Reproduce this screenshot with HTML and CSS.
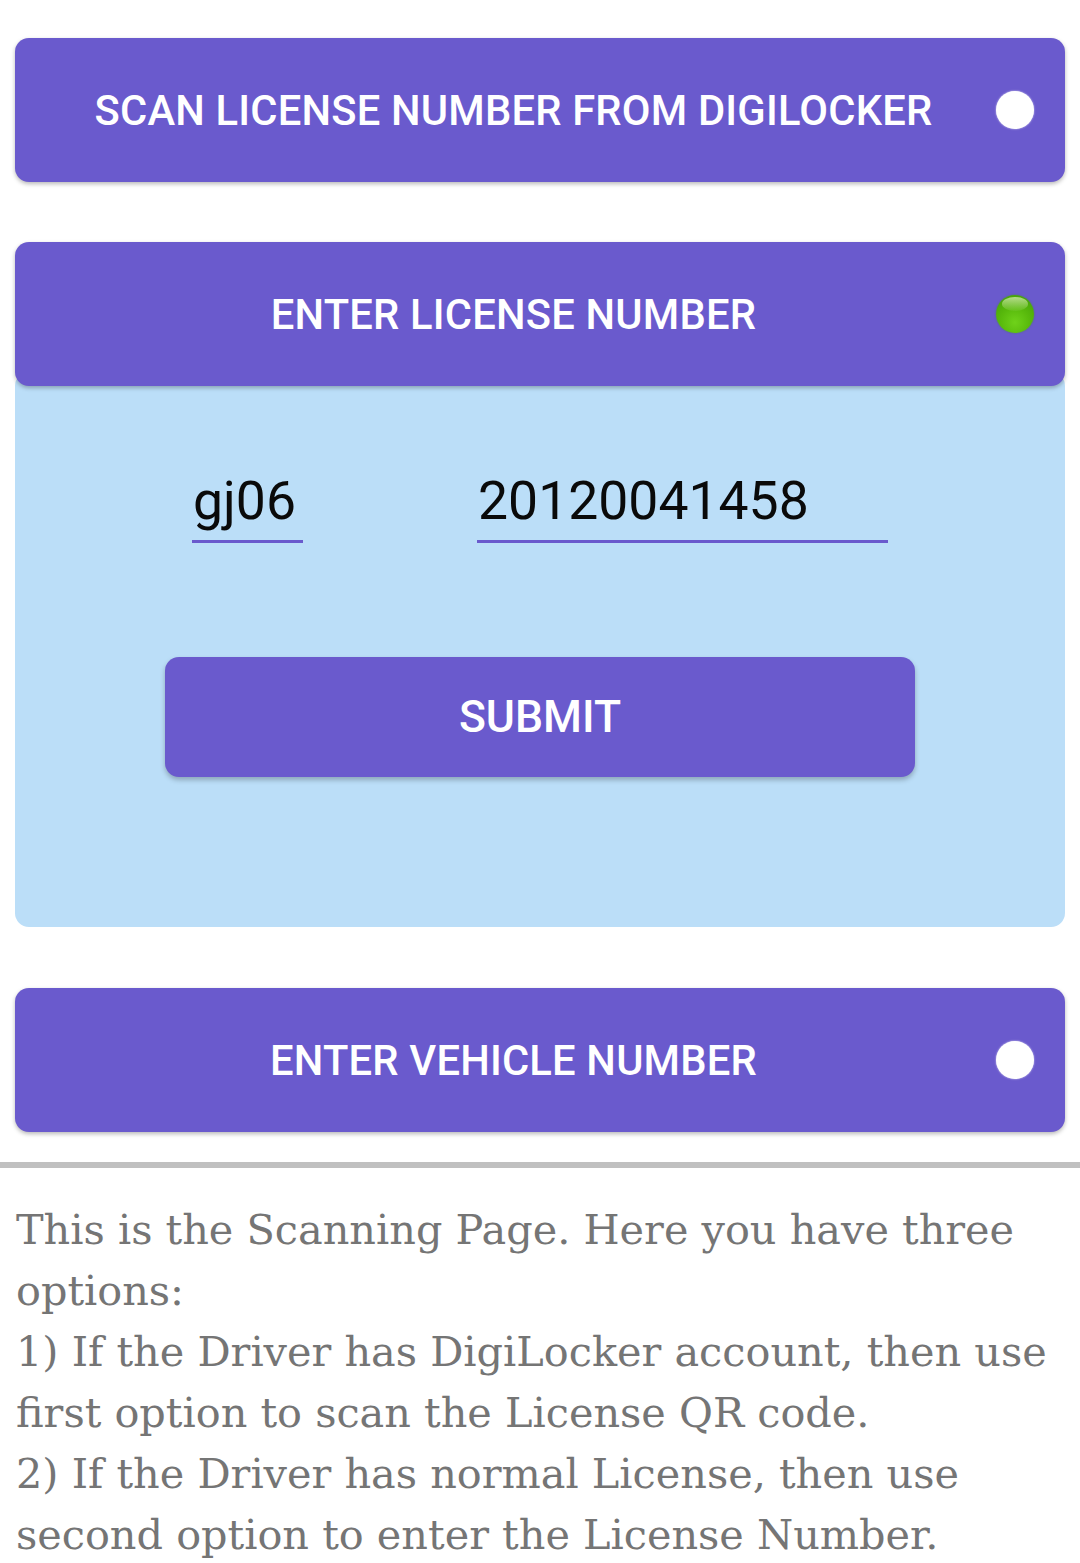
FILE: index.html
```html
<!DOCTYPE html>
<html>
<head>
<meta charset="utf-8">
<link rel="stylesheet" href="styles.css">
</head>
<body>
<div class="page">
  <div class="option">
    <span class="option-label">SCAN LICENSE NUMBER FROM DIGILOCKER</span>
    <span class="dot dot-white"></span>
  </div>

  <div class="option option-second">
    <span class="option-label">ENTER LICENSE NUMBER</span>
    <span class="dot dot-green"></span>
  </div>
  <div class="panel">
    <div class="fields">
      <div class="field field-state">gj06</div>
      <div class="field field-number">20120041458</div>
    </div>
    <div class="submit">SUBMIT</div>
  </div>

  <div class="option option-third">
    <span class="option-label">ENTER VEHICLE NUMBER</span>
    <span class="dot dot-white"></span>
  </div>
</div>
<div class="separator"></div>
<div class="help">This is the Scanning Page. Here you have three options:<br>1) If the Driver has DigiLocker account, then use first option to scan the License QR code.<br>2) If the Driver has normal License, then use second option to enter the License Number.</div>
</body>
</html>
```

FILE: styles.css
```css
html, body {
  margin: 0;
  padding: 0;
  background: #ffffff;
}

body {
  width: 1080px;
  height: 1563px;
  overflow: hidden;
  font-family: Roboto, "Liberation Sans", sans-serif;
}

.page {
  padding: 38px 15px 0 15px;
  display: flex;
  flex-direction: column;
}

.option {
  position: relative;
  z-index: 2;
  height: 144px;
  background: #6a5acd;
  border-radius: 14px;
  box-shadow: 0 2px 4px rgba(0, 0, 0, 0.28);
  display: flex;
  align-items: center;
  color: #ffffff;
}

.option-second {
  margin-top: 60px;
}

.option-third {
  margin-top: 61px;
}

.option-label {
  flex: 1;
  text-align: center;
  padding-left: 16px;
  font-size: 41.7px;
  font-weight: 500;
  letter-spacing: 0.2px;
}

.dot {
  width: 38px;
  height: 38px;
  border-radius: 50%;
  margin-right: 31px;
  flex: none;
}

.dot-white {
  background: #ffffff;
  box-shadow: 0 0 2px rgba(255, 255, 255, 0.8);
}

.dot-green {
  background: radial-gradient(circle at 50% 72%, #6fd21a 0%, #58b90c 45%, #3f9a08 100%);
  box-shadow: 0 0 2px rgba(60, 150, 10, 0.7);
  position: relative;
  overflow: hidden;
}

.dot-green::before {
  content: "";
  position: absolute;
  left: 6px;
  right: 6px;
  top: 2px;
  height: 14px;
  border-radius: 50%;
  background: linear-gradient(#c9e6a0, rgba(140, 210, 80, 0.2));
  opacity: 0.85;
}

.panel {
  position: relative;
  z-index: 1;
  background: #bbdef8;
  border-radius: 14px;
  margin-top: -14px;
  padding: 97px 0 150px 0;
  display: flex;
  flex-direction: column;
  align-items: center;
}

.fields {
  align-self: stretch;
  display: flex;
  padding-left: 177px;
  gap: 174px;
}

.field {
  font-size: 53.5px;
  line-height: 64px;
  padding-bottom: 7px;
  padding-left: 1px;
  border-bottom: 3px solid #6a5acd;
  color: #0a0a0a;
}

.field-state {
  width: 110px;
}

.field-number {
  width: 410px;
}

.submit {
  margin-top: 114px;
  width: 750px;
  height: 120px;
  border-radius: 14px;
  background: #6a5acd;
  box-shadow: 0 3px 5px rgba(0, 0, 0, 0.25);
  color: #ffffff;
  display: flex;
  align-items: center;
  justify-content: center;
  font-size: 44.5px;
  font-weight: 500;
}

.separator {
  margin-top: 30px;
  height: 6px;
  background: #c0c0c0;
}

.help {
  padding: 32px 16px 0 16px;
  font-family: "DejaVu Serif", "Liberation Serif", serif;
  font-size: 41.4px;
  line-height: 61px;
  color: #757575;
}
```
